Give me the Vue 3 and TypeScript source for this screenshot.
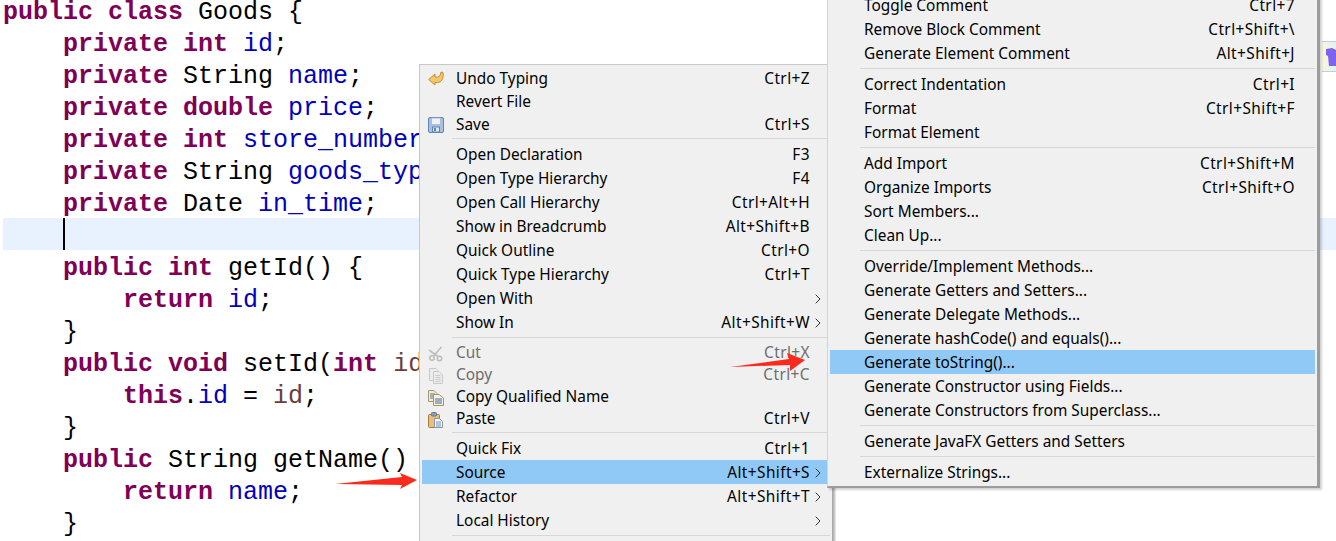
<script setup lang="ts">
type Tok = [string, string?]
interface Entry {
  label?: string
  keys?: string
  more?: boolean
  icon?: string
  off?: boolean
  active?: boolean
  slim?: number
}

const kw = (t: string): Tok => [t, 'kw']
const fd = (t: string): Tok => [t, 'fd']
const lv = (t: string): Tok => [t, 'lv']

const code: Tok[][] = [
  [kw('public'), [' '], kw('class'), [' Goods {']],
  [['    '], kw('private'), [' '], kw('int'), [' '], fd('id'), [';']],
  [['    '], kw('private'), [' String '], fd('name'), [';']],
  [['    '], kw('private'), [' '], kw('double'), [' '], fd('price'), [';']],
  [['    '], kw('private'), [' '], kw('int'), [' '], fd('store_number'), [';']],
  [['    '], kw('private'), [' String '], fd('goods_type'), [';']],
  [['    '], kw('private'), [' Date '], fd('in_time'), [';']],
  [],
  [['    '], kw('public'), [' '], kw('int'), [' getId() {']],
  [['        '], kw('return'), [' '], fd('id'), [';']],
  [['    }']],
  [['    '], kw('public'), [' '], kw('void'), [' setId('], kw('int'), [' '], lv('id'), [') {']],
  [['        '], kw('this'), ['.'], fd('id'), [' = '], lv('id'), [';']],
  [['    }']],
  [['    '], kw('public'), [' String getName() {']],
  [['        '], kw('return'), [' '], fd('name'), [';']],
  [['    }']],
]

const mainMenu: Entry[] = [
  { label: 'Undo Typing', keys: 'Ctrl+Z', icon: 'undo', slim: 23 },
  { label: 'Revert File', slim: 23 },
  { label: 'Save', keys: 'Ctrl+S', icon: 'save', slim: 23 },
  {},
  { label: 'Open Declaration', keys: 'F3' },
  { label: 'Open Type Hierarchy', keys: 'F4' },
  { label: 'Open Call Hierarchy', keys: 'Ctrl+Alt+H' },
  { label: 'Show in Breadcrumb', keys: 'Alt+Shift+B' },
  { label: 'Quick Outline', keys: 'Ctrl+O' },
  { label: 'Quick Type Hierarchy', keys: 'Ctrl+T' },
  { label: 'Open With', more: true },
  { label: 'Show In', keys: 'Alt+Shift+W', more: true },
  {},
  { label: 'Cut', keys: 'Ctrl+X', icon: 'cut', off: true, slim: 22 },
  { label: 'Copy', keys: 'Ctrl+C', icon: 'copy', off: true, slim: 22 },
  { label: 'Copy Qualified Name', icon: 'copyq', slim: 22 },
  { label: 'Paste', keys: 'Ctrl+V', icon: 'paste', slim: 22 },
  {},
  { label: 'Quick Fix', keys: 'Ctrl+1' },
  { label: 'Source', keys: 'Alt+Shift+S', more: true, active: true },
  { label: 'Refactor', keys: 'Alt+Shift+T', more: true },
  { label: 'Local History', more: true },
  {},
]

const subMenu: Entry[] = [
  { label: 'Toggle Comment', keys: 'Ctrl+7' },
  { label: 'Remove Block Comment', keys: 'Ctrl+Shift+\\' },
  { label: 'Generate Element Comment', keys: 'Alt+Shift+J' },
  {},
  { label: 'Correct Indentation', keys: 'Ctrl+I' },
  { label: 'Format', keys: 'Ctrl+Shift+F' },
  { label: 'Format Element' },
  {},
  { label: 'Add Import', keys: 'Ctrl+Shift+M' },
  { label: 'Organize Imports', keys: 'Ctrl+Shift+O' },
  { label: 'Sort Members...' },
  { label: 'Clean Up...' },
  {},
  { label: 'Override/Implement Methods...' },
  { label: 'Generate Getters and Setters...' },
  { label: 'Generate Delegate Methods...' },
  { label: 'Generate hashCode() and equals()...' },
  { label: 'Generate toString()...', active: true },
  { label: 'Generate Constructor using Fields...' },
  { label: 'Generate Constructors from Superclass...' },
  {},
  { label: 'Generate JavaFX Getters and Setters' },
  {},
  { label: 'Externalize Strings...' },
]

const menus = [
  { id: 'main', items: mainMenu },
  { id: 'sub', items: subMenu },
]
</script>

<template>
  <div class="screen">
    <div class="code">
      <div v-for="(line, i) in code" :key="i" class="line" :class="{ current: i === 7 }">
        <template v-if="i === 7">{{ '    ' }}<span class="caret"></span></template>
        <span v-for="(t, j) in line" :key="j" :class="t[1]">{{ t[0] }}</span>
      </div>
    </div>

    <div class="edge">
      <svg width="14" height="20" viewBox="0 0 14 20">
        <path d="M4 2 L10 1 L14 3 V19 H7 L6 9 L4 8 Z" fill="#7d63ee" />
      </svg>
    </div>

    <div v-for="m in menus" :key="m.id" class="menu" :class="m.id">
      <template v-for="(item, i) in m.items" :key="i">
        <div v-if="!item.label" class="sep"></div>
        <div
          v-else
          class="row"
          :class="{ active: item.active, off: item.off, slim22: item.slim === 22, slim23: item.slim === 23 }"
        >
          <span class="ico">
            <svg v-if="item.icon === 'undo'" width="16" height="16" viewBox="0 0 16 16">
              <path d="M0.7 8.5 L7 3 V6 H9.5 C11.5 6 12.8 4 13 1 L15 1.5 C16 7 13.5 11.5 9.5 11.5 H7 V14 Z" fill="#f3c768" stroke="#c58a2c" stroke-width="1" stroke-linejoin="round" />
            </svg>
            <svg v-else-if="item.icon === 'save'" width="16" height="16" viewBox="0 0 16 16">
              <rect x="0.5" y="0.5" width="15" height="15" rx="1.5" fill="#a9c0de" stroke="#5f83b5" />
              <rect x="3.5" y="1" width="9" height="6.5" fill="#eef2f7" stroke="#9fb2cb" stroke-width="0.7" />
              <rect x="4.5" y="10" width="7" height="5" fill="#dfe7f1" stroke="#5f83b5" />
              <rect x="6" y="11" width="2" height="3" fill="#5f83b5" />
            </svg>
            <svg v-else-if="item.icon === 'cut'" width="16" height="16" viewBox="0 0 16 16">
              <g fill="none" stroke="#bdbdbd" stroke-width="1.6">
                <path d="M13.5 1 L5.5 10" />
                <path d="M1 4 L10 10.5" />
                <circle cx="4" cy="12" r="2.2" />
                <circle cx="11.5" cy="12.5" r="2.2" />
              </g>
            </svg>
            <svg v-else-if="item.icon === 'copy'" width="16" height="16" viewBox="0 0 16 16">
              <g stroke="#c9c9c9" fill="#ececec">
                <path d="M1.5 0.5 H8 L10 2.5 V12.5 H1.5 Z" />
                <path d="M5.5 3.5 H11 L14.5 7 V15.5 H5.5 Z" />
              </g>
              <path d="M7.5 7.5 H12.5 M7.5 9.5 H12.5 M7.5 11.5 H12.5 M7.5 13.5 H12.5" stroke="#c9c9c9" />
            </svg>
            <svg v-else-if="item.icon === 'copyq'" width="16" height="16" viewBox="0 0 16 16">
              <path d="M0.5 0.5 H6 L9 3.5 V11.5 H0.5 Z" fill="#f3e9cf" stroke="#a59568" />
              <path d="M2 4 H7 M2 6 H7 M2 8 H7" stroke="#4e78ad" />
              <path d="M5.5 4.5 H11 L15.5 8 V15.5 H5.5 Z" fill="#f6f0dd" stroke="#a59568" />
              <path d="M7 9 H14 M7 11 H14 M7 13 H14" stroke="#3f6ea8" />
            </svg>
            <svg v-else-if="item.icon === 'paste'" width="16" height="16" viewBox="0 0 16 16">
              <rect x="0.5" y="2.5" width="11" height="13" rx="1" fill="#e9bf7c" stroke="#a67c3e" />
              <rect x="3.5" y="0.5" width="5" height="3.5" rx="1" fill="#8d9db5" stroke="#66768e" />
              <path d="M6.5 6.5 H11.5 L14.5 9.5 V15.5 H6.5 Z" fill="#f7f7f2" stroke="#8797ad" />
              <path d="M8 10 H13 M8 12 H13 M8 14 H13" stroke="#6e93bd" />
            </svg>
          </span>
          <span class="label">{{ item.label }}</span>
          <span class="keys">{{ item.keys }}</span>
          <span class="more">
            <svg v-if="item.more" width="6" height="10" viewBox="0 0 6 10">
              <path d="M0.7 0.7 L5 5 L0.7 9.3" fill="none" stroke="#333" stroke-width="1" />
            </svg>
          </span>
        </div>
      </template>
    </div>

    <svg class="arrow" style="left: 335px; top: 472px" width="83" height="18" viewBox="0 0 83 18">
      <path d="M0 12 L67 5 L65 1 L82 8 L65 17 L67 13 Z" fill="#fb2a1c" />
    </svg>
    <svg class="arrow" style="left: 729px; top: 352px" width="78" height="20" viewBox="0 0 78 20">
      <path d="M1 15 L60 7 L58 1 L76 8 L61 19 L61 13 Z" fill="#fb2a1c" />
    </svg>
  </div>
</template>

<style scoped>
.screen {
  position: relative;
  width: 1336px;
  height: 541px;
  overflow: hidden;
  background: #fff;
}

.code {
  margin-top: -6px;
  padding-left: 3px;
  font-family: "Liberation Mono", monospace;
  font-size: 25px;
  color: #000;
  white-space: pre;
}

.line {
  height: 32px;
  line-height: 38px;
}

.line.current {
  background: #e8f2fe;
}

.caret {
  display: inline-block;
  width: 2px;
  height: 32px;
  vertical-align: top;
  background: #000;
}

.kw {
  color: #7f0055;
  font-weight: 700;
}

.fd {
  color: #0000c0;
}

.lv {
  color: #6a3e3e;
}

.edge {
  position: absolute;
  left: 1322px;
  top: 41px;
  width: 14px;
  height: 31px;
  padding-top: 5px;
  box-sizing: border-box;
  border-top: 1px solid #bdd0e6;
  border-bottom: 1px solid #bdd0e6;
  background: linear-gradient(90deg, #fbf6d8, #dff3f5);
}

.menu {
  position: absolute;
  box-sizing: border-box;
  padding: 2px;
  background: #f0f0f0;
  border: 1px solid #c8c8c8;
  font-family: "Noto Sans", sans-serif;
  font-size: 15.4px;
  color: #000;
  white-space: nowrap;
}

.main {
  left: 419px;
  top: 64px;
  width: 414px;
  padding-top: 1px;
  border-right-color: #a8a8a8;
  box-shadow: 2px 2px 2px rgba(0, 0, 0, 0.3);
}

.sub {
  left: 827px;
  top: -10px;
  width: 493px;
  border-color: #d4d4d4;
  border-right: 3px solid #9c9c9c;
  border-bottom: 2px solid #9c9c9c;
  box-shadow: 2px 2px 2px rgba(0, 0, 0, 0.18);
}

.sep {
  height: 1px;
  margin: 3px 0 3px 30px;
  background: #d7d7d7;
}

.row {
  display: grid;
  grid-template-columns: 34px 1fr auto 20px;
  align-items: center;
  height: 24px;
  line-height: 24px;
}

.slim23 {
  height: 23px;
}

.slim22 {
  height: 22px;
}

.row.active {
  background: #90c8f6;
}

.row.off .label,
.row.off .keys {
  color: #6d6d6d;
}

.ico {
  display: flex;
  padding-left: 6px;
}

.label,
.keys {
  margin-top: 1px;
}

.slim22 .label,
.slim22 .keys {
  margin-top: 0;
  margin-bottom: 2px;
}

.keys {
  text-align: right;
  letter-spacing: 0.42px;
}

.more {
  display: flex;
  padding-left: 5px;
}

.arrow {
  position: absolute;
}
</style>
